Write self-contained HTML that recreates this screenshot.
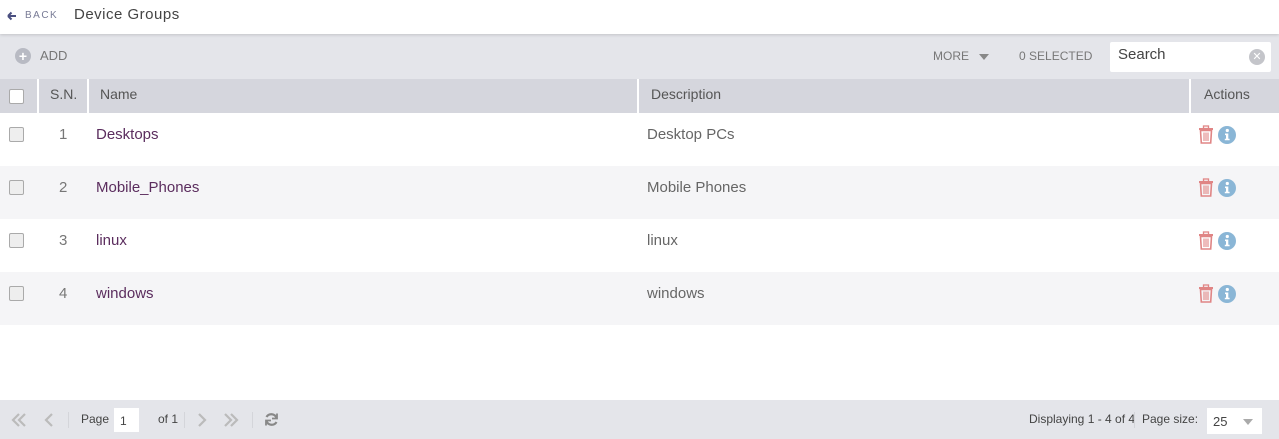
<!DOCTYPE html>
<html><head><meta charset="utf-8"><style>
*{box-sizing:border-box;margin:0;padding:0}
body{width:1279px;height:439px;overflow:hidden;background:#fff;font-family:"Liberation Sans",sans-serif;position:relative}
.a{position:absolute}
.top{left:0;top:0;width:1279px;height:34px;background:#fff;box-shadow:0 1px 3px rgba(0,0,0,.15);z-index:2}
.tb{left:0;top:34px;width:1279px;height:45px;background:#e4e5ea}
.hd{left:0;top:79px;width:1279px;height:34px;background:#d5d6dd}
.vl{top:79px;width:2px;height:34px;background:#fff}
.row{left:0;width:1279px;height:53px}
.cb{width:15px;height:15px;border:1px solid #aaa;background:#eee;border-radius:2px}
.t{font-size:14px;color:#555;white-space:nowrap}
.d{font-size:15px}
.ft{left:0;top:400px;width:1279px;height:39px;background:#e4e5ea}
.f{font-size:12px;color:#444;white-space:nowrap}
</style></head><body>
<div class="a top">
<svg class="a" style="left:7px;top:11px" width="10" height="10"><path d="M1 5h8M1 5l3.5-3.5M1 5l3.5 3.5" stroke="#4a4f80" stroke-width="2" fill="none"/></svg>
<div class="a" style="left:25px;top:10px;font-size:10px;letter-spacing:1.5px;color:#777a95">BACK</div>
<div class="a" style="left:74px;top:6px;font-size:15px;letter-spacing:.5px;color:#444">Device Groups</div>
</div>
<div class="a tb">
<div class="a" style="left:15px;top:14px;width:16px;height:16px;border-radius:50%;background:#b8bac3;color:#fff;font-size:14px;line-height:16px;text-align:center;font-weight:bold">+</div>
<div class="a t" style="left:40px;top:14px;font-size:13px;color:#777">ADD</div>
<div class="a t" style="left:933px;top:15px;font-size:12px;color:#777">MORE</div>
<div class="a" style="left:979px;top:20px;border:5px solid transparent;border-top:6px solid #888"></div>
<div class="a t" style="left:1019px;top:15px;font-size:12px;color:#777">0 SELECTED</div>
<div class="a" style="left:1110px;top:8px;width:161px;height:30px;background:#fff;border-radius:2px"></div>
<div class="a t" style="left:1118px;top:12px;font-size:15px;color:#444">Search</div>
<div class="a" style="left:1249px;top:15px;width:16px;height:16px;border-radius:50%;background:#c4c5ca;color:#fff;font-size:11px;line-height:16px;text-align:center">✕</div>
</div>
<div class="a hd">
<div class="a cb" style="left:9px;top:10px;background:#fff"></div>
<div class="a t" style="left:50px;top:7px">S.N.</div>
<div class="a t" style="left:100px;top:7px">Name</div>
<div class="a t" style="left:651px;top:7px">Description</div>
<div class="a t" style="left:1204px;top:7px">Actions</div>
</div>
<div class="a vl" style="left:37px"></div><div class="a vl" style="left:87px"></div><div class="a vl" style="left:637px"></div><div class="a vl" style="left:1189px"></div>

<div class="a row" style="top:113px;background:#fff"></div>
<div class="a row" style="top:166px;background:#f5f5f7"></div>
<div class="a row" style="top:219px;background:#fff"></div>
<div class="a row" style="top:272px;background:#f5f5f7"></div>

<div class="a cb" style="left:9px;top:127px"></div><div class="a t d" style="left:59px;top:126px;color:#777">1</div><div class="a t d" style="left:96px;top:126px;color:#5b2d5e">Desktops</div><div class="a t d" style="left:647px;top:126px;color:#666">Desktop PCs</div>
<div class="a cb" style="left:9px;top:180px"></div><div class="a t d" style="left:59px;top:179px;color:#777">2</div><div class="a t d" style="left:96px;top:179px;color:#5b2d5e">Mobile_Phones</div><div class="a t d" style="left:647px;top:179px;color:#666">Mobile Phones</div>
<div class="a cb" style="left:9px;top:233px"></div><div class="a t d" style="left:59px;top:232px;color:#777">3</div><div class="a t d" style="left:96px;top:232px;color:#5b2d5e">linux</div><div class="a t d" style="left:647px;top:232px;color:#666">linux</div>
<div class="a cb" style="left:9px;top:286px"></div><div class="a t d" style="left:59px;top:285px;color:#777">4</div><div class="a t d" style="left:96px;top:285px;color:#5b2d5e">windows</div><div class="a t d" style="left:647px;top:285px;color:#666">windows</div>

<svg class="a" style="left:1197px;top:125px" width="42" height="190">
<defs><g id="ic">
<rect x="2" y="3" width="14" height="2" fill="#e08585"/>
<rect x="6.5" y="1" width="5" height="2.5" fill="none" stroke="#e08585" stroke-width="1.3"/>
<path d="M3.5 5.5h11l-0.8 12.5h-9.4z" fill="none" stroke="#e08585" stroke-width="1.6"/>
<path d="M7 7.5v8.5M9 7.5v8.5M11 7.5v8.5" stroke="#e08585" stroke-width="1.1"/>
<circle cx="30" cy="10" r="9" fill="#8ab6d6"/>
<circle cx="30.3" cy="5.5" r="1.6" fill="#fff"/>
<path d="M28 8.5h3.3v5.2h1.3v1.6h-4.8v-1.6h1.2v-3.6h-1z" fill="#fff"/>
</g></defs>
<use href="#ic" y="0"/><use href="#ic" y="53"/><use href="#ic" y="106"/><use href="#ic" y="159"/>
</svg>

<div class="a ft">
<svg class="a" style="left:10px;top:12px" width="60" height="16" fill="none" stroke="#bbb" stroke-width="2.2">
<path d="M9 2L3 8l6 6M15 2L9 8l6 6"/><path d="M42 2l-6 6 6 6"/>
</svg>
<div class="a" style="left:68px;top:12px;width:1px;height:16px;background:#d4d5da"></div>
<div class="a f" style="left:81px;top:12px">Page</div>
<div class="a" style="left:114px;top:8px;width:25px;height:24px;background:#fff"></div>
<div class="a f" style="left:120px;top:14px">1</div>
<div class="a f" style="left:158px;top:12px">of 1</div>
<div class="a" style="left:184px;top:12px;width:1px;height:16px;background:#d4d5da"></div>
<svg class="a" style="left:195px;top:12px" width="50" height="16" fill="none" stroke="#bbb" stroke-width="2.2">
<path d="M4 2l6 6-6 6M30 2l6 6-6 6M36 2l6 6-6 6"/>
</svg>
<div class="a" style="left:252px;top:12px;width:1px;height:16px;background:#d4d5da"></div>
<svg class="a" style="left:264px;top:12px" width="15" height="15" fill="none" stroke="#888" stroke-width="2.2">
<path d="M12.5 6A5.5 5.5 0 0 0 2.5 5M2.5 9A5.5 5.5 0 0 0 12.5 10"/>
<path d="M13 1.5v5h-5M2 13.5v-5h5" stroke-width="1.8"/>
</svg>
<div class="a f" style="left:1029px;top:12px">Displaying 1 - 4 of 4</div>
<div class="a" style="left:1134px;top:12px;width:1px;height:16px;background:#d4d5da"></div>
<div class="a f" style="left:1142px;top:12px">Page size:</div>
<div class="a" style="left:1207px;top:8px;width:55px;height:26px;background:#fff"></div>
<div class="a f" style="left:1213px;top:14px;font-size:13px">25</div>
<div class="a" style="left:1243px;top:19px;border:5px solid transparent;border-top:6px solid #aaa"></div>
</div>
</body></html>
